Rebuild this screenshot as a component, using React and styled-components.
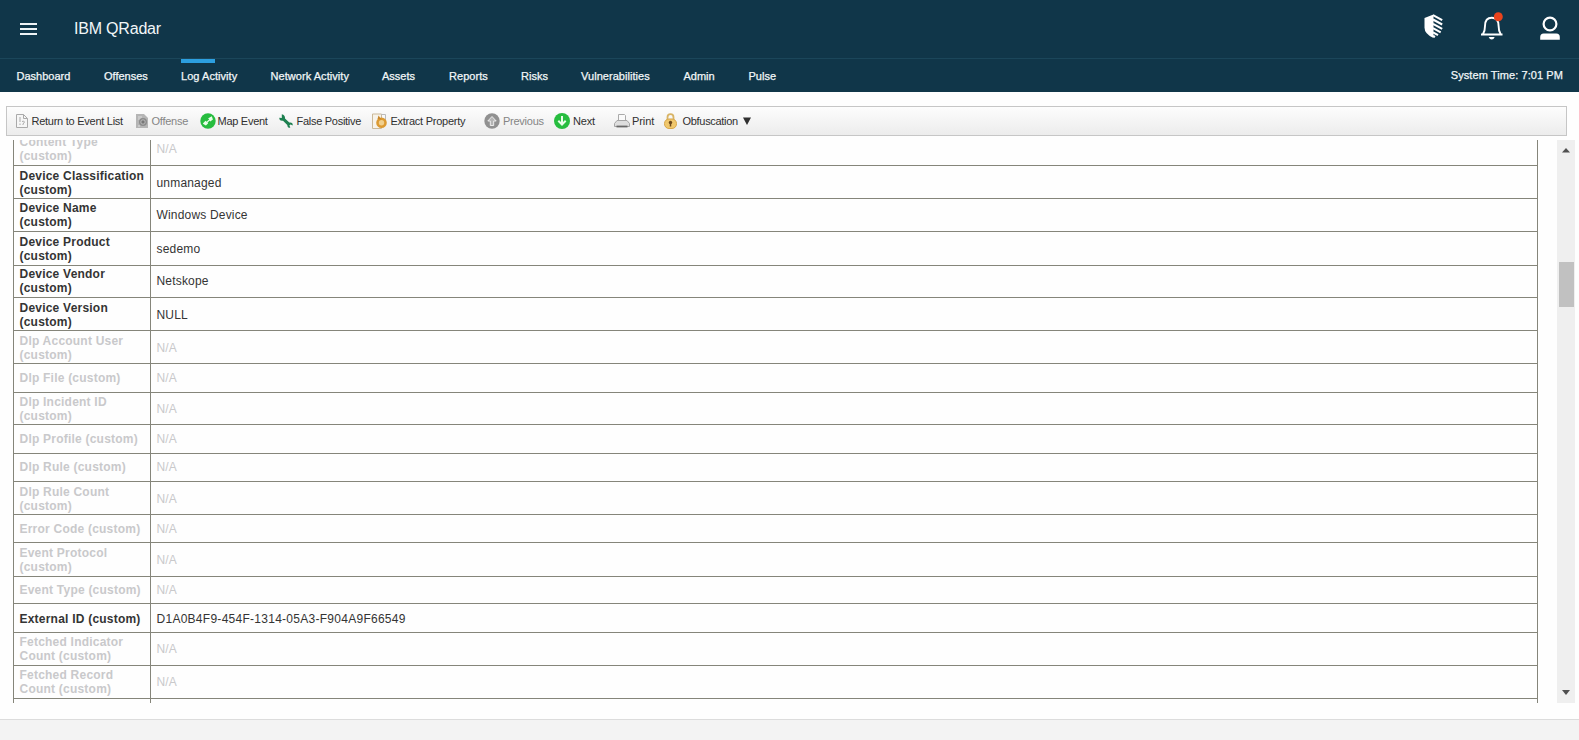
import React from "react";
import styled, { createGlobalStyle } from "styled-components";

const GlobalStyle = createGlobalStyle`
  * { box-sizing: border-box; }
  body { margin: 0; background: #fefefe; font-family: "Liberation Sans", Arial, sans-serif; }
`;

const Page = styled.div`
  display: flex;
  flex-direction: column;
  width: 1579px;
  height: 740px;
  overflow: hidden;
  white-space: nowrap;
`;

const Header = styled.header`
  height: 92px;
  flex: none;
  background: #103649;
  color: #f2f6f8;
`;

const TopBar = styled.div`
  display: flex;
  align-items: center;
  height: 59px;
  padding: 0 19px 0 20px;
  border-bottom: 1px solid #1b465a;
`;

const MenuButton = styled.div`
  display: flex;
  flex-direction: column;
  gap: 3px;
  width: 17px;
`;

const MenuLine = styled.span`
  height: 2px;
  background: #eef3f5;
`;

const Title = styled.h1`
  margin: 0 auto 0 37px;
  font-size: 16px;
  font-weight: 400;
  line-height: 20px;
  letter-spacing: -0.2px;
`;

const HeaderIcons = styled.div`
  display: flex;
  align-items: center;
  margin-top: -6px;
`;

const HeaderIcon = styled.svg`
  display: block;
  width: ${(p) => p.$w}px;
  height: 28px;
  margin-left: ${(p) => p.$gap || 0}px;
`;

const Nav = styled.nav`
  display: flex;
  height: 33px;
  padding: 0 16px 0 16.5px;
`;

const NavItem = styled.div`
  position: relative;
  width: ${(p) => p.$w}px;
  font-size: 11px;
  line-height: 34px;
  letter-spacing: ${(p) => p.$ls}px;
  -webkit-text-stroke: 0.25px currentColor;
`;

const ActiveMark = styled.span`
  position: absolute;
  left: 0;
  top: 0;
  width: 34px;
  height: 4px;
  background: #2c9fe0;
`;

const SystemTime = styled.div`
  margin-left: auto;
  font-size: 11px;
  line-height: 32px;
  letter-spacing: 0.08px;
  -webkit-text-stroke: 0.25px currentColor;
`;

const Toolbar = styled.div`
  display: flex;
  align-items: center;
  flex: none;
  width: 1561px;
  height: 30px;
  margin: 14px 0 0 6px;
  padding-left: 8px;
  border: 1px solid #c6c6c6;
  background: linear-gradient(#fdfdfd, #ececec);
`;

const Tool = styled.div`
  display: flex;
  align-items: center;
  width: ${(p) => p.$w}px;
  color: ${(p) => (p.$off ? "#858585" : "#303030")};
`;

const ToolIcon = styled.svg`
  flex: none;
  width: 16px;
  height: 16px;
  margin-right: ${(p) => p.$gap}px;
`;

const ToolLabel = styled.span`
  font-size: 11px;
  line-height: 16px;
  letter-spacing: ${(p) => p.$ls}px;
`;

const Caret = styled.svg`
  width: 8px;
  height: 8px;
  margin-left: 5px;
`;

const Body = styled.main`
  display: flex;
  flex: none;
  height: 563px;
  margin-top: 4px;
  overflow: hidden;
`;

const Table = styled.div`
  width: 1525px;
  margin: -8px 19px 0 13px;
  border: solid #85857a;
  border-width: 0 1px;
`;

const Row = styled.div`
  display: flex;
  height: ${(p) => p.$h}px;
  border-bottom: 1px solid #85857a;
  color: ${(p) => (p.$dim ? "#c9c9cb" : "#343434")};
  font-size: 12px;
  line-height: 14px;
`;

const Cell = styled.div`
  display: flex;
  align-items: center;
  padding: ${(p) => (p.$raised ? "0 0 1px" : "1px 0 0")};
`;

const Label = styled(Cell)`
  width: 137px;
  padding-left: 5.5px;
  border-right: 1px solid #85857a;
  font-weight: 700;
  letter-spacing: 0.22px;
  white-space: pre;
`;

const Value = styled(Cell)`
  padding-left: 5.5px;
  letter-spacing: ${(p) => p.$ls}px;
`;

const ScrollTrack = styled.div`
  display: flex;
  flex-direction: column;
  align-items: center;
  width: 18px;
  background: #efefef;
`;

const ScrollArrow = styled.svg`
  width: 18px;
  height: 20px;
`;

const Thumb = styled.div`
  width: 15px;
  height: 45px;
  margin: 102px 0 auto;
  background: #c1c1c1;
`;

const Footer = styled.footer`
  flex: 1;
  margin-top: 16px;
  border-top: 1px solid #dcdcdc;
  background: #f3f3f3;
`;

const NAV = [
  ["Dashboard", 87.5, 0],
  ["Offenses", 77, 0],
  ["Log Activity", 89.5, 0.05],
  ["Network Activity", 111.5, 0.05],
  ["Assets", 67, 0],
  ["Reports", 72, 0.05],
  ["Risks", 60, 0],
  ["Vulnerabilities", 102.5, 0.05],
  ["Admin", 65, 0],
  ["Pulse", 60, 0],
];

const ICONS = {
  list: (
    <>
      <path d="M1.5 1.5h7l4 4v9h-11z" fill="#f6f6f6" stroke="#aaa" />
      <path d="M8.5 1.5v4h4" fill="none" stroke="#aaa" />
      <path d="M5 4v5M5 10.5v1.5M7 8.5q2-1 2.5.5L8 11v1" fill="none" stroke="#aaa" />
    </>
  ),
  offense: (
    <>
      <path d="M1 1h8l4 4v10H1z" fill="#b5b5b5" />
      <path d="M3 4h4M3 6h3M3 13h2" stroke="#ddd" />
      <circle cx="8" cy="9" r="4" fill="#8b8b8b" />
      <circle cx="8" cy="9" r="2.2" fill="#777" stroke="#bbb" />
    </>
  ),
  map: (
    <>
      <circle cx="8" cy="8" r="7.7" fill="#27bd3f" />
      <path d="M3.8 10.5l1.7-1.8 1.8 1.6-1.5 1.4zM9 5.5l2.500-1.300.7 2-1.800 1.500zM6.500 9.700l4-3.800" fill="#e9ffe9" stroke="#e9ffe9" strokeWidth="1.2" />
    </>
  ),
  wrench: (
    <path
      d="M3.800 1.300v3.600L1.300 4.800c-.2 2.200 1.500 3.400 3.700 2.900l4.300 4.200c0 2 1.200 3 3 2.900l-.9-2.500 1.200-.9 2.100 1c.3-2-1-3.200-3.400-2.800L7 5.600C7.300 3.300 6 1.800 3.800 1.300z"
      fill="#1d8050"
    />
  ),
  extract: (
    <>
      <path d="M.5 1v14.500h9V1z" fill="#f7f3ea" stroke="#cbb998" />
      <path d="M9 1.500h4.500v6" fill="none" stroke="#bbb" />
      <circle cx="9.500" cy="9.800" r="4" fill="#f1d08e" stroke="#dc9a32" strokeWidth="2.600" />
      <path d="M6.500 2.500l3 4-4-.5z" fill="#c8862a" />
    </>
  ),
  up: (
    <>
      <circle cx="8" cy="8" r="7.700" fill="#909090" />
      <path d="M8 3.500L3.800 8h2.500v4.500h3.400V8h2.500z" fill="#b4b4b4" stroke="#f3f3f3" strokeWidth=".9" />
    </>
  ),
  down: (
    <>
      <circle cx="8" cy="8" r="8" fill="#27bd3f" />
      <path d="M8 3v8M4.300 7.800L8 11.500l3.700-3.700" fill="none" stroke="#e9ffe9" strokeWidth="2" />
    </>
  ),
  print: (
    <>
      <path d="M4.500 8V1.500h6l1 1V8" fill="#fafafa" stroke="#aaa" />
      <path d="M3 7.500h10l2.500 3v3H.5v-3z" fill="#dedede" stroke="#a5a5a5" />
      <path d="M2.500 13.500h11" stroke="#696969" strokeWidth="1.800" />
    </>
  ),
  lock: (
    <>
      <path d="M4.500 7V4.200a3 3 0 0 1 6 0V7" fill="none" stroke="#d8b466" strokeWidth="1.800" />
      <rect x="1.500" y="6" width="12" height="9.500" rx="4.500" fill="#f0c76c" stroke="#d8a74a" />
      <circle cx="7.500" cy="9.500" r="1.700" fill="#6d481b" />
      <path d="M7.500 10v3.500" stroke="#6d481b" strokeWidth="1.500" />
    </>
  ),
};

const TOOLS = [
  { icon: "list", text: "Return to Event List", w: 119.5, gap: 0.5, ls: -0.26 },
  { icon: "offense", text: "Offense", w: 65, gap: 1, off: true, ls: -0.25 },
  { icon: "map", text: "Map Event", w: 78, gap: 2, ls: -0.27 },
  { icon: "wrench", text: "False Positive", w: 94, gap: 3, ls: -0.28 },
  { icon: "extract", text: "Extract Property", w: 112.5, gap: 3, ls: -0.26 },
  { icon: "up", text: "Previous", w: 70, gap: 3, off: true, ls: -0.25 },
  { icon: "down", text: "Next", w: 60, gap: 3, ls: -0.15 },
  { icon: "print", text: "Print", w: 48.5, gap: 2, ls: -0.1 },
  { icon: "lock", text: "Obfuscation", w: 100, gap: 4, caret: true, ls: -0.3 },
];

const ROWS = [
  { label: "Content Type\n(custom)", h: 34 },
  { label: "Device Classification\n(custom)", h: 33, value: "unmanaged" },
  { label: "Device Name\n(custom)", h: 33, value: "Windows Device", raised: true },
  { label: "Device Product\n(custom)", h: 34, value: "sedemo" },
  { label: "Device Vendor\n(custom)", h: 32, value: "Netskope", raised: true },
  { label: "Device Version\n(custom)", h: 33, value: "NULL" },
  { label: "Dlp Account User\n(custom)", h: 33 },
  { label: "Dlp File (custom)", h: 29, raised: true },
  { label: "Dlp Incident ID\n(custom)", h: 32 },
  { label: "Dlp Profile (custom)", h: 29, raised: true },
  { label: "Dlp Rule (custom)", h: 28, raised: true },
  { label: "Dlp Rule Count\n(custom)", h: 33 },
  { label: "Error Code (custom)", h: 28 },
  { label: "Event Protocol\n(custom)", h: 34 },
  { label: "Event Type (custom)", h: 27, raised: true },
  { label: "External ID (custom)", h: 29, value: "D1A0B4F9-454F-1314-05A3-F904A9F66549", ls: 0.27 },
  { label: "Fetched Indicator\nCount (custom)", h: 33, raised: true },
  { label: "Fetched Record\nCount (custom)", h: 33, raised: true },
  { label: "", h: 30, value: " " },
];

export default function App() {
  return (
    <Page>
      <GlobalStyle />
      <Header>
        <TopBar>
          <MenuButton>
            <MenuLine />
            <MenuLine />
            <MenuLine />
          </MenuButton>
          <Title>IBM QRadar</Title>
          <HeaderIcons>
            <HeaderIcon $w={20} viewBox="0 0 20 28">
              <path d="M9.500 2.500L.5 6v9.500q0 6.500 9 10.500z" fill="#fff" />
              <path d="M9 3.200l9.200 5M9 7.500l9.200 5M9 11.800l9.200 5M9 16.100l7.700 4.200M9 20.400l5 2.800M9 23.800l2 1.200" stroke="#fff" strokeWidth="2.100" />
            </HeaderIcon>
            <HeaderIcon $w={24} $gap={36} viewBox="0 0 24 28">
              <path d="M1 22.500h21.500M3 22c1.700-2.500 2-4.500 2-8 0-5 2.500-8.200 6.800-8.200s6.800 3.200 6.800 8.200c0 3.500.3 5.500 2 8" fill="none" stroke="#fff" strokeWidth="1.900" />
              <path d="M8.700 25h6q-1 2.500-3 2.500t-3-2.500z" fill="#fff" />
              <circle cx="18.300" cy="4.800" r="4.500" fill="#e9431c" />
            </HeaderIcon>
            <HeaderIcon $w={20} $gap={36} viewBox="0 0 20 28">
              <circle cx="10" cy="12" r="6.400" fill="none" stroke="#fff" strokeWidth="2.200" />
              <path d="M.2 27.800v-2.800q0-3.500 3.500-3.500h12.600q3.500 0 3.500 3.500v2.800z" fill="#fff" />
            </HeaderIcon>
          </HeaderIcons>
        </TopBar>
        <Nav>
          {NAV.map(([name, w, ls]) => (
            <NavItem key={name} $w={w} $ls={ls}>
              {name === "Log Activity" && <ActiveMark />}
              {name}
            </NavItem>
          ))}
          <SystemTime>System Time: 7:01 PM</SystemTime>
        </Nav>
      </Header>
      <Toolbar>
        {TOOLS.map((t) => (
          <Tool key={t.text} $w={t.w} $off={t.off}>
            <ToolIcon $gap={t.gap} viewBox="0 0 16 16">
              {ICONS[t.icon]}
            </ToolIcon>
            <ToolLabel $ls={t.ls}>{t.text}</ToolLabel>
            {t.caret && (
              <Caret viewBox="0 0 8 8">
                <path d="M0 .5h8L4 8z" fill="#303030" />
              </Caret>
            )}
          </Tool>
        ))}
      </Toolbar>
      <Body>
        <Table>
          {ROWS.map(({ label, h, value, raised, ls = 0.18 }) => (
            <Row key={label} $h={h} $dim={!value}>
              <Label $raised={raised}>{label}</Label>
              <Value $raised={raised} $ls={ls}>
                {value || "N/A"}
              </Value>
            </Row>
          ))}
        </Table>
        <ScrollTrack>
          <ScrollArrow viewBox="0 0 18 20">
            <path d="M5 12.500L9 8l4 4.500z" fill="#505050" />
          </ScrollArrow>
          <Thumb />
          <ScrollArrow viewBox="0 0 18 20">
            <path d="M5 7l4 5 4-5z" fill="#505050" />
          </ScrollArrow>
        </ScrollTrack>
      </Body>
      <Footer />
    </Page>
  );
}
